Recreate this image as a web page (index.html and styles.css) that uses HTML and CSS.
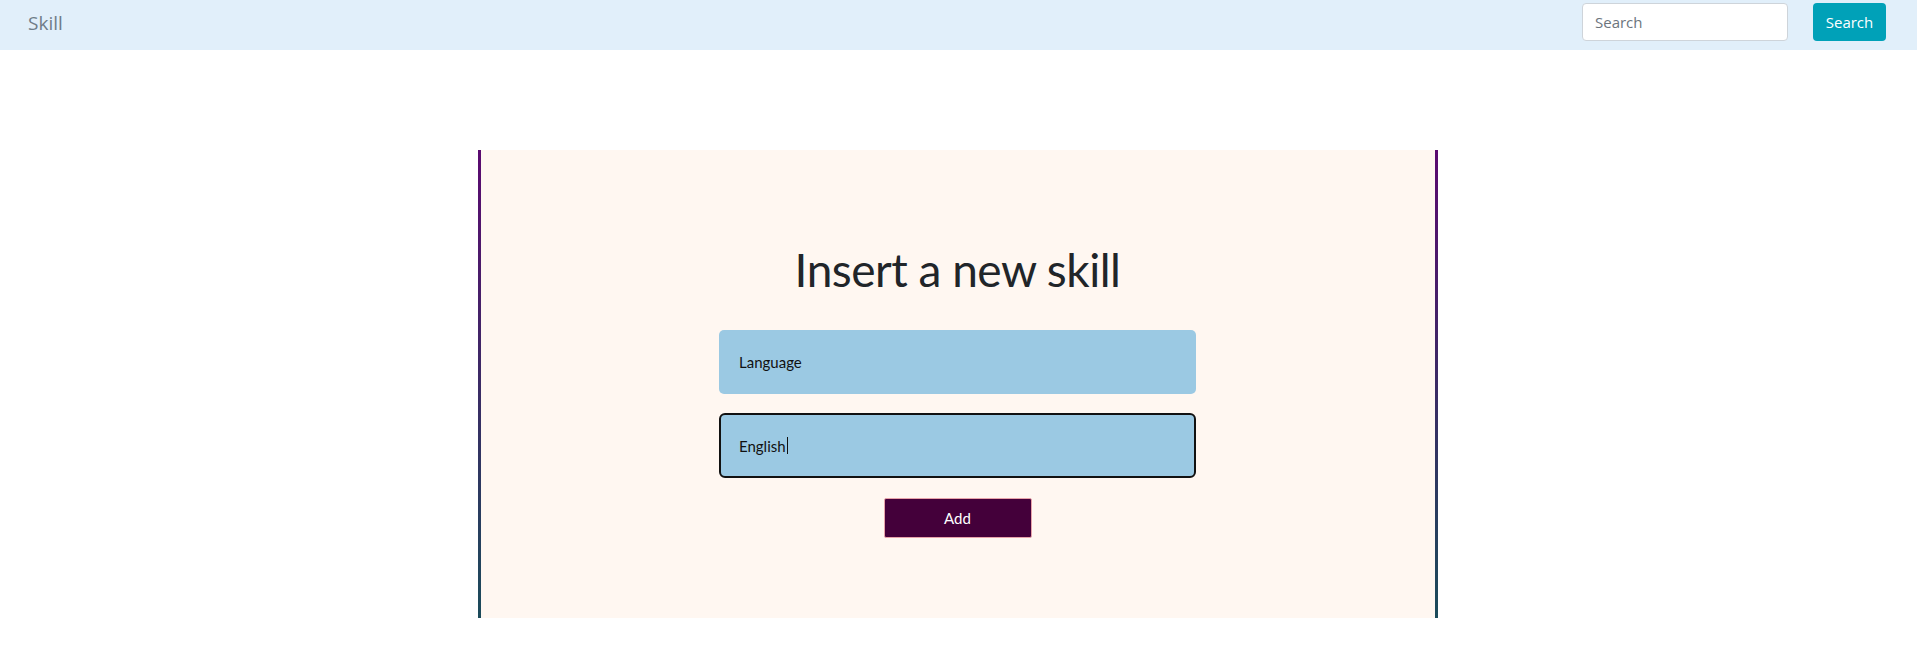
FILE: index.html
```html
<!DOCTYPE html>
<html lang="en">
<head>
<meta charset="utf-8">
<title>Skill</title>
<link rel="stylesheet" href="styles.css">
</head>
<body>
<nav class="navbar">
  <a class="brand" href="#">Skill</a>
  <form class="search-form">
    <input class="search-input" type="text" placeholder="Search">
    <button class="search-btn" type="button">Search</button>
  </form>
</nav>
<main class="page">
  <section class="card">
    <h1 class="title">Insert a new skill</h1>
    <div class="form">
      <input class="field" type="text" value="Language">
      <div class="field field-focus">English<span class="caret"></span></div>
      <button class="add-btn" type="button">Add</button>
    </div>
  </section>
</main>
</body>
</html>
```
FILE: styles.css
```css
html, body {
  margin: 0;
  padding: 0;
  background: #ffffff;
  font-family: "Open Sans", "Liberation Sans", sans-serif;
}

.navbar {
  height: 50px;
  background: #e1effa;
  display: flex;
  align-items: center;
  justify-content: space-between;
  padding: 0 31px 0 28px;
  box-sizing: border-box;
}

.brand {
  font-size: 19px;
  color: #6f7c88;
  text-decoration: none;
  line-height: 1;
  margin-top: -4px;
}

.search-form {
  display: flex;
  align-items: center;
  gap: 25px;
  margin-top: -6px;
}

.search-input {
  width: 206px;
  height: 38px;
  box-sizing: border-box;
  border: 1px solid #ced4da;
  border-radius: 4px;
  background: #fff;
  padding: 0 12px;
  font-family: "Open Sans", "Liberation Sans", sans-serif;
  font-size: 15px;
  color: #495057;
}

.search-input::placeholder {
  color: #6c757d;
}

.search-btn {
  width: 73px;
  height: 38px;
  border: none;
  border-radius: 4px;
  background: #00a1b8;
  color: #fff;
  font-family: "Open Sans", "Liberation Sans", sans-serif;
  font-size: 15px;
  padding: 0;
}

.page {
  padding-top: 100px;
}

.card {
  width: 960px;
  margin: 0 0 0 calc(50% - 481px);
  box-sizing: border-box;
  min-height: 467px;
  background: #fff7f1;
  border-style: solid;
  border-width: 0 3px;
  border-image: linear-gradient(to bottom, #5b0a70, #1b4b5a) 1;
  padding: 92px 0 80px;
  display: flex;
  flex-direction: column;
  align-items: center;
}

.title {
  margin: 0;
  font-family: "Lato", "Open Sans", sans-serif;
  font-weight: 400;
  font-size: 46px;
  line-height: 56px;
  color: #212529;
  letter-spacing: -0.5px;
}

.form {
  width: 477px;
  margin-top: 32px;
  display: flex;
  flex-direction: column;
  align-items: center;
  gap: 19px;
}

.field {
  width: 100%;
  height: 64px;
  box-sizing: border-box;
  background: #9bc9e3;
  border: none;
  border-radius: 5px;
  padding: 0 20px;
  font-family: "Lato", "Open Sans", sans-serif;
  font-size: 15px;
  color: #111;
  display: flex;
  align-items: center;
  outline: none;
}

.field-focus {
  height: 65px;
  border: 2px solid #111;
  border-radius: 6px;
  padding-left: 18px;
}

.caret {
  display: inline-block;
  width: 1px;
  height: 17px;
  background: #111;
  margin-left: 1px;
}

.add-btn {
  margin-top: 1px;
  width: 148px;
  height: 40px;
  background: #44003a;
  border: 1px solid #e8a3aa;
  border-radius: 2px;
  color: #fff;
  font-family: "Lato", "Open Sans", sans-serif;
  font-size: 15px;
}
```
